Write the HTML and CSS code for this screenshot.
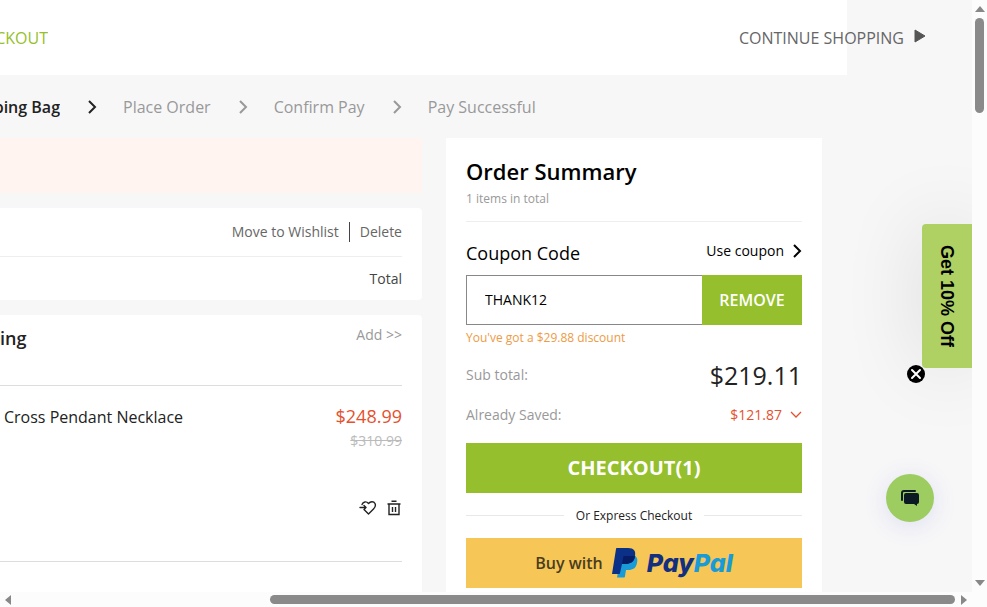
FILE: index.html
```html
<!DOCTYPE html>
<html lang="en">
<head>
  <meta charset="UTF-8">
  <meta name="viewport" content="width=device-width, initial-scale=1.0">
  <title>Shopping Bag</title>
  <link rel="stylesheet" href="styles.css">
</head>
<body>

<div class="window">
  <div class="viewport">

    <header class="header">
      <div class="clip header-title">CHECKOUT</div>
      <a class="continue" href="#">CONTINUE SHOPPING
        <svg width="12" height="18" viewBox="0 0 12 18"><path d="M1 1l10 6-10 6z" fill="#555" stroke="#555" stroke-linejoin="round"/></svg>
      </a>
    </header>

    <!-- Steps -->
    <nav class="steps">
      <div class="clip step-current">Shopping Bag</div>
      <svg class="step-arrow step-arrow-active" width="10" height="14" viewBox="0 0 10 14"><path d="M2 1l6 6-6 6"/></svg>
      <span class="step">Place Order</span>
      <svg class="step-arrow" width="10" height="14" viewBox="0 0 10 14"><path d="M2 1l6 6-6 6"/></svg>
      <span class="step">Confirm Pay</span>
      <svg class="step-arrow" width="10" height="14" viewBox="0 0 10 14"><path d="M2 1l6 6-6 6"/></svg>
      <span class="step">Pay Successful</span>
    </nav>

    <main class="columns">
      <div class="bag">
        <div class="notice"></div>

        <section class="card">
          <div class="card-actions">
            <button type="button">Move to Wishlist</button>
            <button type="button">Delete</button>
          </div>
          <div class="card-total">Total</div>
        </section>

        <section class="card card-items">
          <div class="shipping">
            <h2>ing</h2>
            <a href="#">Add &gt;&gt;</a>
          </div>
          <div class="product">
            <div class="product-info">
              <span class="product-name">Cross Pendant Necklace</span>
              <div class="product-price">
                <strong>$248.99</strong>
                <del>$310.99</del>
              </div>
            </div>
            <div class="product-tools">
              <button type="button" aria-label="Move to Wishlist">
                <svg width="18" height="16" viewBox="0 0 18 16" fill="none" stroke="#222" stroke-width="1.4" stroke-linejoin="round" stroke-linecap="round"><path d="M3 4.5C4 1.500 7.500 1 9.500 3.500 11.500 1 14.800 1.200 16 3.500c1 2.200 0 4-1.500 5.500L9.500 14 5 9.500M1 7.500h6M5 5.500l2 2-2 2"/></svg>
              </button>
              <button type="button" aria-label="Delete">
                <svg width="14" height="16" viewBox="0 0 14 16" fill="none" stroke="#222" stroke-width="1.4"><path d="M4.500 1.200h5M.5 4h13M2 4v10.500h10V4M5.500 7v5M8.500 7v5"/></svg>
              </button>
            </div>
          </div>
        </section>
      </div>

      <!-- Order summary -->
      <aside class="summary">
        <div class="summary-head">
          <h1>Order Summary</h1>
          <p>1 items in total</p>
        </div>

        <div class="coupon-head">
          <label for="coupon">Coupon Code</label>
          <a href="#">Use coupon
            <svg width="10" height="14" viewBox="0 0 10 14"><path d="M2 1l6 6-6 6"/></svg>
          </a>
        </div>
        <div class="coupon">
          <input id="coupon" type="text" value="THANK12">
          <button type="button">REMOVE</button>
        </div>
        <p class="coupon-message">You've got a $29.88 discount</p>

        <div class="amount">
          <span>Sub total:</span>
          <strong class="subtotal">$219.11</strong>
        </div>
        <div class="amount">
          <span>Already Saved:</span>
          <strong class="saved">$121.87
            <svg width="12" height="8" viewBox="0 0 12 8"><path d="M1 1l5 5 5-5"/></svg>
          </strong>
        </div>

        <button class="checkout" type="button">CHECKOUT(1)</button>
        <div class="divider">Or Express Checkout</div>
        <button class="paypal" type="button">
          <span>Buy with</span>
          <svg width="28" height="32" viewBox="0 0 28 32">
            <path d="M10 8h12c4 1 5 4 4 8-1 5-4 7-9 7h-2l-1 6c0 1-.5 1.500-1.500 1.500H6z" fill="#189bd7"/>
            <path d="M6 1h11c6 0 8 3 7 8-1 6-5 8-10 8h-3L9 26c0 1-.5 1-1.500 1H1L5 2c0-.7.500-1 1-1z" fill="#0a3187"/>
            <path d="M11 17l1.500-8h10c1 0 1.500.2 1.500 1-1 5-5 7-10 7z" fill="#061c64"/>
          </svg>
          <span class="paypal-word">Pay<span>Pal</span></span>
        </button>
      </aside>
    </main>

    <!-- Floating widgets -->
    <button class="offer" type="button">Get 10% Off</button>
    <button class="offer-close" type="button" aria-label="Close">
      <svg width="18" height="18" viewBox="0 0 18 18"><circle cx="9" cy="9" r="9"/><path d="M5 5l8 8M13 5l-8 8" stroke="#fff" stroke-width="2" stroke-linecap="round"/></svg>
    </button>
    <button class="chat" type="button" aria-label="Chat">
      <svg width="20" height="18" viewBox="0 0 20 18"><path d="M2 11V4q0-2 2-2h11" fill="none" stroke="#0c1a24" stroke-width="2" stroke-linecap="round"/><path d="M6 4h11q2 0 2 2v7q0 2-2 2v2l-3-2H6q-2 0-2-2V6q0-2 2-2z" fill="#0c1a24"/></svg>
    </button>
  </div>

  <!-- Scrollbars -->
  <div class="scroll-y">
    <svg width="10" height="6" viewBox="0 0 10 6"><path d="M0 6l5-6 5 6z"/></svg>
    <div class="scroll-track"><div class="scroll-thumb"></div></div>
    <svg width="10" height="6" viewBox="0 0 10 6"><path d="M0 0l5 6 5-6z"/></svg>
  </div>
  <div class="scroll-x">
    <svg width="6" height="10" viewBox="0 0 6 10"><path d="M6 0L0 5l6 5z"/></svg>
    <div class="scroll-track"><div class="scroll-thumb"></div></div>
    <svg width="6" height="10" viewBox="0 0 6 10"><path d="M0 0l6 5-6 5z"/></svg>
  </div>
</div>

</body>
</html>
```
FILE: styles.css
```css
:root {
  --color-bg: #f7f7f8;
  --color-text: #222;
  --color-muted: #999;
  --color-line: #eee;
  --color-green: #95bf2c;
  --color-red: #e4512f;
}

* {
  box-sizing: border-box;
}

body {
  margin: 0;
  font-family: "Open Sans", "Noto Sans", sans-serif;
  font-size: 14px;
  line-height: 20px;
  color: var(--color-text);
}

h1, h2, p {
  margin: 0;
}

a {
  color: inherit;
  text-decoration: none;
}

button {
  padding: 0;
  border: none;
  background: none;
  font: inherit;
  color: inherit;
  cursor: pointer;
}

svg {
  display: block;
  flex-shrink: 0;
}

/* Window with its scrollbars */
.window {
  display: grid;
  grid-template-columns: minmax(0, 1fr) 15px;
  grid-template-rows: minmax(0, 1fr) 15px;
  height: 100vh;
  background: #fcfcfc;
}

.viewport {
  position: relative;
  overflow: hidden;
  background: var(--color-bg);
}

.scroll-y,
.scroll-x {
  display: flex;
  align-items: center;
  gap: 6px;
  fill: #888;
}

.scroll-y {
  flex-direction: column;
  padding: 6px 0;
}

.scroll-x {
  padding: 0 5px;
}

.scroll-track {
  flex: 1;
  display: flex;
}

.scroll-thumb {
  border-radius: 5px;
  background: #8a8a8a;
}

.scroll-y .scroll-thumb {
  width: 9px;
  height: 17%;
}

.scroll-x .scroll-track {
  justify-content: flex-end;
}

.scroll-x .scroll-thumb {
  width: 73%;
  height: 9px;
}

/* Header */
.header {
  display: flex;
  align-items: center;
  justify-content: space-between;
  height: 75px;
  margin-right: 125px;
  background: #fff;
  font-size: 16px;
}

.clip {
  display: flex;
  justify-content: flex-end;
  overflow: hidden;
  white-space: nowrap;
}

.header-title {
  width: 48px;
  color: var(--color-green);
}

.continue {
  display: flex;
  align-items: center;
  gap: 10px;
  margin-right: -79px;
  color: #666;
}

/* Steps */
.steps {
  display: flex;
  align-items: center;
  height: 63px;
  font-size: 16px;
  color: var(--color-muted);
}

.step-current {
  width: 60px;
  font-weight: 600;
  color: var(--color-text);
}

.step-arrow {
  margin: 0 26px 0 27px;
}

.step-arrow path,
.coupon-head path,
.saved path {
  fill: none;
  stroke: currentColor;
  stroke-width: 2;
}

.step-arrow-active {
  color: var(--color-text);
}

/* Bag */
.columns {
  display: grid;
  grid-template-columns: minmax(0, 1fr) 376px;
  gap: 24px;
  padding-right: 150px;
}

.bag {
  display: flex;
  flex-direction: column;
  gap: 15px;
}

.notice {
  height: 55px;
  background: #fff4ef;
}

.card {
  padding-right: 20px;
  border-radius: 0 4px 4px 0;
  background: #fff;
}

.card-items {
  flex: 1;
}

.card-actions {
  display: flex;
  align-items: center;
  justify-content: flex-end;
  height: 49px;
  border-bottom: 1px solid var(--color-line);
  color: #666;
}

.card-actions button + button {
  margin-left: 10px;
  padding-left: 10px;
  border-left: 1px solid #444;
}

.card-total {
  padding: 12px 0 11px;
  text-align: right;
  color: #444;
}

.shipping {
  display: flex;
  justify-content: space-between;
  height: 71px;
  padding-top: 10px;
  border-bottom: 1px solid #ddd;
}

.shipping h2 {
  padding-top: 3px;
  font-size: 18px;
  font-weight: 600;
}

.shipping a {
  color: var(--color-muted);
}

.product {
  display: flex;
  flex-direction: column;
  justify-content: space-between;
  height: 176px;
  padding: 20px 0 45px 4px;
  border-bottom: 1px solid #ddd;
}

.product-info {
  display: flex;
  justify-content: space-between;
}

.product-name {
  padding-top: 1px;
  font-size: 16px;
}

.product-price {
  display: flex;
  flex-direction: column;
  gap: 5px;
  text-align: right;
}

.product-price strong {
  font-size: 18px;
  font-weight: 400;
  color: var(--color-red);
}

.product-price del {
  color: #bbb;
}

.product-tools {
  display: flex;
  justify-content: flex-end;
  gap: 10px;
  padding-right: 1px;
}

/* Order summary */
.summary {
  padding: 18px 20px 20px;
  background: #fff;
}

.summary-head {
  height: 66px;
  border-bottom: 1px solid var(--color-line);
}

.summary h1 {
  padding-bottom: 3px;
  font-size: 22px;
  font-weight: 600;
  line-height: 30px;
  color: #000;
}

.summary-head p {
  font-size: 12px;
  color: var(--color-muted);
}

.coupon-head {
  display: flex;
  justify-content: space-between;
  height: 53px;
  padding-top: 19px;
  color: #000;
}

.coupon-head label {
  padding-top: 2px;
  font-size: 18px;
  font-weight: 500;
}

.coupon-head a,
.saved {
  display: flex;
  align-items: center;
  gap: 8px;
  height: 20px;
}

.coupon {
  display: flex;
  height: 50px;
}

.coupon input {
  flex: 1;
  min-width: 0;
  padding: 0 18px;
  border: 1px solid #888;
  border-right: none;
  border-radius: 0;
  background: #fff;
  font: inherit;
  color: #000;
}

.coupon button {
  width: 100px;
  background: var(--color-green);
  font-size: 16px;
  font-weight: 600;
  color: #fff;
}

.coupon-message {
  padding-top: 3px;
  font-size: 12px;
  color: #ed9b45;
}

.amount {
  display: flex;
  align-items: center;
  justify-content: space-between;
  height: 40px;
  color: var(--color-muted);
}

.coupon-message + .amount {
  margin-top: 7px;
}

.amount strong {
  font-weight: 400;
}

.subtotal {
  font-size: 25px;
  color: var(--color-text);
}

.amount .saved {
  font-weight: 500;
  color: var(--color-red);
}

.checkout {
  width: 100%;
  height: 50px;
  margin-top: 8px;
  background: var(--color-green);
  font-size: 20px;
  font-weight: 700;
  color: #fff;
}

.saved path {
  stroke-width: 1.3;
}

.divider {
  display: flex;
  align-items: center;
  gap: 12px;
  height: 45px;
  font-size: 12px;
}

.divider::before,
.divider::after {
  content: "";
  flex: 1;
  height: 1px;
  background: #e8e8e8;
}

.paypal {
  display: flex;
  align-items: center;
  justify-content: center;
  gap: 8px;
  width: 100%;
  height: 50px;
  background: #f6c657;
  font-size: 16px;
  font-weight: 600;
  color: #4a3c20;
}

.paypal-word {
  font-family: Inter, "Open Sans", sans-serif;
  font-size: 25px;
  font-style: italic;
  font-weight: 800;
  color: #12307f;
}

.paypal-word span {
  color: #189bd7;
}

/* Floating widgets */
.offer {
  position: absolute;
  top: 224px;
  right: 0;
  width: 50px;
  height: 144px;
  border-radius: 4px 0 0 4px;
  background: #afd163;
  box-shadow: 0 0 80px rgba(0, 0, 0, 0.12);
  font-family: "Liberation Sans", Arial, sans-serif;
  font-size: 18px;
  font-weight: 700;
  color: #000;
  writing-mode: vertical-rl;
}

.offer-close {
  position: absolute;
  top: 365px;
  right: 47px;
}

.chat {
  position: absolute;
  right: 38px;
  bottom: 70px;
  display: flex;
  align-items: center;
  justify-content: center;
  width: 48px;
  height: 48px;
  border-radius: 50%;
  background: #9dcc60;
  box-shadow: 0 4px 24px rgba(70, 80, 200, 0.14);
}
```
